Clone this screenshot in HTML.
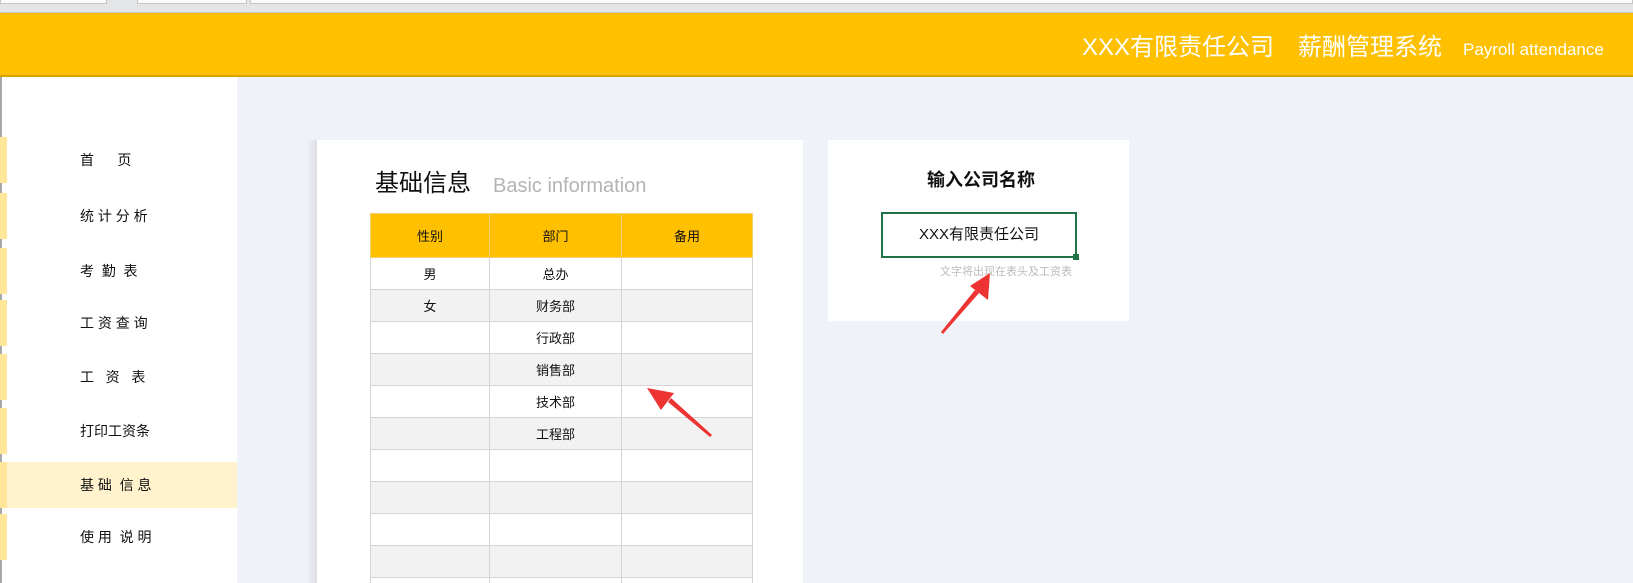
<!DOCTYPE html>
<html><head><meta charset="utf-8"><style>
*{margin:0;padding:0;box-sizing:border-box}
html,body{width:1633px;height:583px;overflow:hidden}
body{background:#eff2f9;font-family:"Liberation Sans","Noto Sans CJK SC",sans-serif;position:relative}
#w{position:absolute;left:0;top:0;width:1633px;height:583px;overflow:hidden}
.abs{position:absolute}
.top{left:0;top:0;width:1633px;height:13px;background:#e4e5e7;border-bottom:1px solid #c8c8c8}
.tab{top:0;height:4px;border:1px solid #c6c6c6;border-top:none;background:#fafafa}
.hdr{left:0;top:13px;width:1633px;height:64px;background:#ffc000;border-bottom:2px solid #d9a300;color:#fff}
.side{left:0;top:77px;width:237px;height:506px;background:#fff;border-left:2px solid #a8a8a8}
.item{left:0;width:237px;height:46px;font-size:14px;color:#111;line-height:46px}
.item .bar{position:absolute;left:0;top:0;width:7px;height:46px;background:#ffe699}
.item span{position:absolute;left:80px;white-space:pre}
.card{background:#fff}
table{border-collapse:collapse;position:absolute;left:370px;top:213px;font-size:13px;color:#111}
td{border:1px solid #d4d4d4;height:32px;text-align:center;padding:0}
tr.h td{background:#ffc000;border-color:#f0d070;height:44px}
tr:nth-child(odd):not(.h) td{background:#f2f2f2}
</style></head><body><div id="w">
<div class="abs top"></div>
<div class="abs tab" style="left:0;width:107px"></div>
<div class="abs tab" style="left:137px;width:110px"></div>
<div class="abs tab" style="left:250px;width:1383px"></div>
<div class="abs hdr">
<div class="abs" style="left:1082px;top:20px;font-size:24px;line-height:30px">XXX有限责任公司</div>
<div class="abs" style="left:1298px;top:20px;font-size:24px;line-height:30px">薪酬管理系统</div>
<div class="abs" style="left:1463px;top:25px;font-size:17px;line-height:24px">Payroll attendance</div>
</div>
<div class="abs side"></div>
<div class="abs item" style="top:137px"><div class="bar"></div><span>首      页</span></div>
<div class="abs item" style="top:193px"><div class="bar"></div><span>统 计 分 析</span></div>
<div class="abs item" style="top:248px"><div class="bar"></div><span>考  勤  表</span></div>
<div class="abs item" style="top:300px"><div class="bar"></div><span>工 资 查 询</span></div>
<div class="abs item" style="top:354px"><div class="bar"></div><span>工   资   表</span></div>
<div class="abs item" style="top:408px"><div class="bar"></div><span>打印工资条</span></div>
<div class="abs item" style="top:462px;background:#fff2cc"><div class="bar"></div><span>基 础  信 息</span></div>
<div class="abs item" style="top:514px"><div class="bar"></div><span>使 用  说 明</span></div>

<div class="abs" style="left:307px;top:140px;width:10px;height:443px;background:linear-gradient(to right,#eff2f9,#dcdee3)"></div>
<div class="abs card" style="left:317px;top:140px;width:486px;height:443px"></div>
<div class="abs" style="left:375px;top:168px;font-size:24px;color:#111;line-height:32px">基础信息</div>
<div class="abs" style="left:493px;top:172px;font-size:20px;color:#b4b4b4;line-height:28px">Basic information</div>
<table>
<colgroup><col style="width:119px"><col style="width:132px"><col style="width:131px"></colgroup>
<tr class="h"><td>性别</td><td>部门</td><td>备用</td></tr>
<tr><td>男</td><td>总办</td><td></td></tr>
<tr><td>女</td><td>财务部</td><td></td></tr>
<tr><td></td><td>行政部</td><td></td></tr>
<tr><td></td><td>销售部</td><td></td></tr>
<tr><td></td><td>技术部</td><td></td></tr>
<tr><td></td><td>工程部</td><td></td></tr>
<tr><td></td><td></td><td></td></tr>
<tr><td></td><td></td><td></td></tr>
<tr><td></td><td></td><td></td></tr>
<tr><td></td><td></td><td></td></tr>
<tr><td></td><td></td><td></td></tr>
</table>

<div class="abs card" style="left:828px;top:140px;width:301px;height:181px"></div>
<div class="abs" style="left:828px;top:166px;width:306px;text-align:center;font-size:18px;font-weight:bold;color:#111;line-height:28px">输入公司名称</div>
<div class="abs" style="left:881px;top:212px;width:196px;height:46px;border:2px solid #217346;text-align:center;line-height:42px;font-size:15px;color:#111">XXX有限责任公司</div>
<div class="abs" style="left:1073px;top:254px;width:6px;height:6px;background:#217346"></div>
<div class="abs" style="left:940px;top:265px;font-size:11px;color:#bbb;line-height:14px">文字将出现在表头及工资表</div>

<svg class="abs" style="left:0;top:0" width="1633" height="583">
<polygon points="710,437 668,402 671,398 712,435" fill="#ee3333"/>
<polygon points="647,388 674,393 661,410" fill="#ee3333"/>
<polygon points="941,332 975,290 979,293 943,334" fill="#ee3333"/>
<polygon points="990,273 988,300 970,286" fill="#ee3333"/>
</svg>
</div></body></html>
